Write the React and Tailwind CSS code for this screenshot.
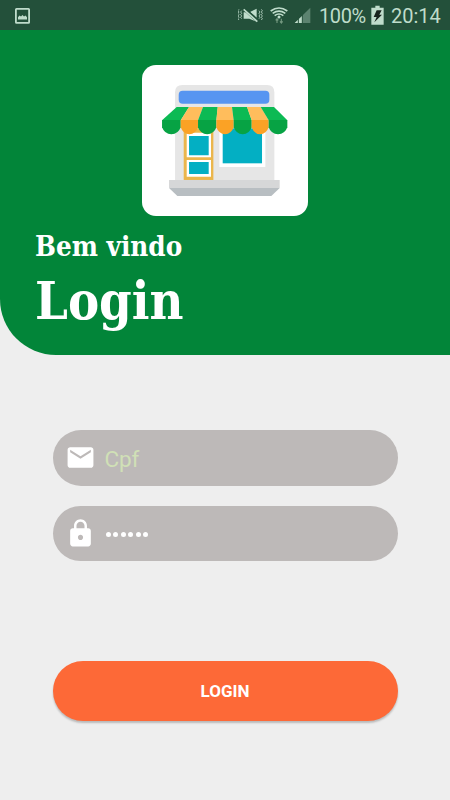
function StatusBar() {
  return (
    <div className="flex h-[30px] items-center bg-[#23503a] pl-[15px] text-[#bfdccb]">
      <svg className="mt-px h-4 w-[15px]" viewBox="0 0 15 16">
        <rect x="0.9" y="0.9" width="13.2" height="14" rx="0.6" fill="none" stroke="currentColor" strokeWidth="1.8" />
        <path d="M3 11.5V9.2L4.5 7.6L6 8.5L7.5 7L9 8.5L10.5 7.5L12 9.2V11.5Z" fill="currentColor" />
      </svg>
      <svg className="ml-[208px] h-[30px] w-[75px] shrink-0" viewBox="0 0 225 90" fill="none" stroke="currentColor">
        <path d="M3 28l-3 4 3 4-3 4 3 4-3 4 3 4-3 4 3 4M11 32l-3 4 3 4-3 4 3 4-3 4 3 4M63 32l3 4-3 4 3 4-3 4 3 4-3 4M70 28l3 4-3 4 3 4-3 4 3 4-3 4 3 4-3 4" strokeWidth="2.4" />
        <path d="M17 37H27L56 61V65L34 56H17ZM36 36L56 26V53Z" fill="currentColor" stroke="none" />
        <path d="M20 28L60 64" stroke="#23503a" strokeWidth="10" />
        <path d="M17 28L58 65" strokeWidth="5" />
        <path d="M98 33Q123 15 148 33M104 40Q123 27 142 40M110 47Q123 37 136 47" strokeWidth="5" />
        <circle cx="123" cy="51" r="4.5" fill="currentColor" stroke="none" />
        <path d="M117 69V57M113 61L117 56L121 61M130 56V68M126 64L130 69L134 64" stroke="#73977f" strokeWidth="3.4" />
        <path d="M170 69L217 23V69Z" fill="#5c8370" stroke="none" />
        <path d="M170 69L193 47V69Z" fill="currentColor" stroke="none" />
        <path d="M181 50V69M193 40V69" stroke="#23503a" strokeWidth="3" />
      </svg>
      <span className="ml-[6px] w-[47px] shrink-0 whitespace-nowrap pt-[2px] font-[Roboto,sans-serif] text-[20px] leading-none tracking-[-0.4px]">100%</span>
      <svg className="ml-[5px] h-5 w-[13px] shrink-0" viewBox="0 0 39 60">
        <path d="M13 2H26V8H38V59H1V8H13Z" fill="currentColor" />
        <path d="M17 16H32L25 29H33L10 52L17 36H8Z" fill="#17231d" />
      </svg>
      <span className="ml-[7px] pt-[2px] font-[Roboto,sans-serif] text-[20px] leading-none">20:14</span>
    </div>
  );
}

const stripes = [
  { top: "M126 141H163L138 181H82Z", x: 82, w: 56, light: "#0cba54", dark: "#07a344" },
  { top: "M163 141H205L190 181H138Z", x: 138, w: 52, light: "#ffbd5c", dark: "#fba225" },
  { top: "M205 141H249L245 181H190Z", x: 190, w: 55, light: "#0cba54", dark: "#07a344" },
  { top: "M249 141H292L297 181H245Z", x: 245, w: 52, light: "#ffbd5c", dark: "#fba225" },
  { top: "M292 141H337L351 181H297Z", x: 297, w: 54, light: "#0cba54", dark: "#07a344" },
  { top: "M337 141H378L402 181H351Z", x: 351, w: 51, light: "#ffbd5c", dark: "#fba225" },
  { top: "M378 141H418L458 181H402Z", x: 402, w: 56, light: "#0cba54", dark: "#07a344" },
];

function StoreLogo() {
  return (
    <svg className="h-full w-full" viewBox="22 15 496 454">
      <path d="M121 360V97Q121 75 143 75H397Q419 75 419 97V360Z" fill="#e6e6e6" />
      <rect x="132" y="92" width="272" height="39" rx="12" fill="#5795f1" />
      <rect x="254" y="200" width="138" height="121" fill="#fff" />
      <rect x="264" y="205" width="118" height="105" fill="#03afc3" />
      <rect x="147" y="205" width="89" height="155" fill="#ebb64c" />
      <path d="M156 218H229V292H156ZM156 300H229V350H156Z" fill="#fff" />
      <path d="M163 228H222V286H163ZM163 306H222V342H163Z" fill="#03afc3" />
      {stripes.map((s) => (
        <g key={s.x}>
          <path d={s.top} fill={s.light} />
          <path
            d={`M${s.x} 180H${s.x + s.w}V202Q${s.x + s.w - 7} 222 ${s.x + s.w / 2} 223Q${s.x + 7} 222 ${s.x} 202Z`}
            fill={s.dark}
          />
        </g>
      ))}
      <path d="M103 360H435V384H103Z" fill="#d6d7d8" />
      <path d="M103 384H435L410 408H128Z" fill="#b8bec2" />
    </svg>
  );
}

function Field({ icon, children }) {
  return (
    <div className="flex h-[55.5px] items-center rounded-full bg-[#bdb9b8] pl-[12.5px]">
      <svg className="h-[31px] w-[31px] fill-white" viewBox="0 0 24 24">
        <path d={icon} />
      </svg>
      {children}
    </div>
  );
}

const mail = "M20 4H4c-1.1 0-1.99.9-1.99 2L2 18c0 1.1.9 2 2 2h16c1.1 0 2-.9 2-2V6c0-1.1-.9-2-2-2zm0 4l-8 5-8-5V6l8 5 8-5v2z";
const lock = "M18 8h-1V6c0-2.76-2.24-5-5-5S7 3.24 7 6v2H6c-1.1 0-2 .9-2 2v10c0 1.1.9 2 2 2h12c1.1 0 2-.9 2-2V10c0-1.1-.9-2-2-2zm-6 9c-1.1 0-2-.9-2-2s.9-2 2-2 2 .9 2 2-.9 2-2 2zm3.1-9H8.9V6c0-1.71 1.39-3.1 3.1-3.1 1.71 0 3.1 1.39 3.1 3.1v2z";

export default function App() {
  return (
    <div className="h-[800px] w-[450px] overflow-hidden bg-[#eeeeee]">
      <StatusBar />
      <header className="h-[325px] rounded-bl-[56px] bg-[#028539] pt-[35px]">
        <div className="ml-[142.3px] h-[151.3px] w-[165.4px] overflow-hidden rounded-[14px] bg-white">
          <StoreLogo />
        </div>
        <div className="ml-[35px] font-['DejaVu_Serif_Condensed','DejaVu_Serif',serif] font-bold text-white">
          <p className="mt-[12.7px] h-9 origin-left scale-x-[1.02] whitespace-nowrap text-[27px] leading-9">Bem vindo</p>
          <h1 className="h-[72px] whitespace-nowrap text-[52px] leading-[72px]">Login</h1>
        </div>
      </header>
      <main className="mx-[52.5px] flex flex-col pt-[75px]">
        <Field icon={mail}>
          <span className="ml-[8.5px] pt-[3px] font-[Roboto,sans-serif] text-[22.5px] leading-none tracking-[-0.2px] text-[#d0e0b6]">Cpf</span>
        </Field>
        <div className="h-5" />
        <Field icon={lock}>
          <div className="ml-[9.5px] flex gap-[2.5px] pt-[2px]">
            {[0, 1, 2, 3, 4, 5].map((n) => (
              <span key={n} className="h-[5px] w-[5px] rounded-full bg-white" />
            ))}
          </div>
        </Field>
        <button className="mt-[100px] h-[60px] rounded-full bg-[#fd6937] pt-[2px] font-[Roboto,sans-serif] text-[17px] font-bold text-white shadow-[0_2px_2px_rgba(0,0,0,0.22)]">
          LOGIN
        </button>
      </main>
    </div>
  );
}
